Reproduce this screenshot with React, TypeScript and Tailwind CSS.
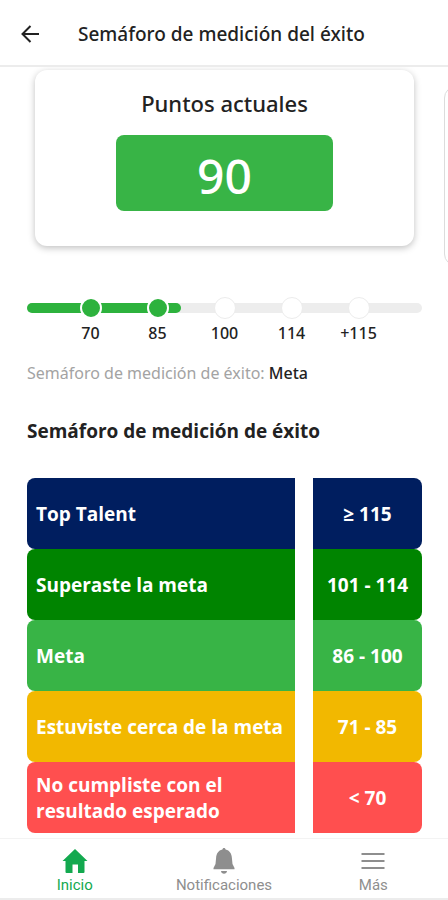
import React from "react";

type Step = {
  label: string;
  reached: boolean;
};

const steps: Step[] = [
  { label: "70", reached: true },
  { label: "85", reached: true },
  { label: "100", reached: false },
  { label: "114", reached: false },
  { label: "+115", reached: false },
];

const levels = [
  { name: "Top Talent", range: "≥ 115", color: "bg-[#001e5f]" },
  { name: "Superaste la meta", range: "101 - 114", color: "bg-[#008400]" },
  { name: "Meta", range: "86 - 100", color: "bg-[#38b446]" },
  { name: "Estuviste cerca de la meta", range: "71 - 85", color: "bg-[#f2b800]" },
  { name: "No cumpliste con el resultado esperado", range: "< 70", color: "bg-[#ff4f4f]" },
];

const Header = () => (
  <header className="flex h-[67px] items-center border-b-2 border-[#ececec] bg-white pt-0.5 pl-5">
    <button type="button" aria-label="Volver" className="mr-9">
      <svg width="22" height="22" viewBox="0 0 22 22" fill="none" stroke="#222" strokeWidth="2">
        <path d="M19 11H3M10.5 3L2.5 11L10.5 19" />
      </svg>
    </button>
    <h1 className="text-[19px] leading-7 font-medium text-[#222]">
      Semáforo de medición del éxito
    </h1>
  </header>
);

const ScoreCards = () => (
  <section className="flex gap-[30px] overflow-hidden pt-[3px] pb-[31px] pl-[35px]">
    <div className="h-[176px] w-[calc(100%-34px)] shrink-0 rounded-xl bg-white px-[81px] pt-[18px] text-center shadow-[0_2px_7px_rgba(0,0,0,0.25)]">
      <h2 className="text-[22px] leading-[30px] font-medium text-[#222]">Puntos actuales</h2>
      <p className="mt-[17px] rounded-lg bg-[#38b446] pt-1.5 text-5xl leading-[70px] font-medium text-white">
        90
      </p>
    </div>
    <div className="mt-4 h-[180px] w-full shrink-0 rounded-xl border border-[#dcdcdc] bg-white" />
  </section>
);

const Progress = ({ percent }: { percent: number }) => (
  <div className="grid items-start">
    <div className="col-start-1 row-start-1 mt-[6px] h-[10px] rounded-full bg-[#ededed]">
      <div className="h-full rounded-full bg-[#2db23d]" style={{ width: `${percent}%` }} />
    </div>
    <ol className="col-start-1 row-start-1 flex px-[30px]">
      {steps.map((step) => (
        <li key={step.label} className="flex flex-1 flex-col items-center">
          <span
            className={
              step.reached
                ? "size-[22px] rounded-full border-2 border-white bg-[#2db23d]"
                : "size-[22px] rounded-full border border-[#ececec] bg-white"
            }
          />
          <span className="mt-0.5 text-base leading-6 font-medium text-[#222]">{step.label}</span>
        </li>
      ))}
    </ol>
  </div>
);

const LevelsTable = () => (
  <table className="block w-full font-['Open_Sans',sans-serif] text-[19px] leading-[26px] font-bold text-white">
    <tbody className="block">
      {levels.map((level) => (
        <tr key={level.name} className="flex h-[71px] gap-[18px]">
          <th
            scope="row"
            className={`flex flex-1 items-center rounded-l-lg pr-2 pl-[9px] text-left ${level.color}`}
          >
            {level.name}
          </th>
          <td className={`flex w-[109px] items-center justify-center rounded-r-lg ${level.color}`}>
            {level.range}
          </td>
        </tr>
      ))}
    </tbody>
  </table>
);

const BottomNav = () => (
  <nav className="mt-[5px] grid h-[62px] grid-cols-3 border-t border-b-2 border-t-[#f3f3f3] border-b-[#ececec] bg-white font-[Roboto,sans-serif] text-[15px] leading-4 text-[#8e8e8e]">
    <a href="#inicio" className="flex flex-col items-center gap-0.5 pt-2 text-[#13a94f]">
      <svg width="28" height="28" viewBox="0 0 28 28" fill="currentColor">
        <path d="M14 2L26.5 14H23.5V25Q23.5 26 22.5 26H17V17.5H11.5V26H5.5Q4.5 26 4.5 25V14H1.5Z" />
      </svg>
      <span>Inicio</span>
    </a>
    <a href="#notificaciones" className="flex flex-col items-center gap-0.5 pt-2">
      <svg width="28" height="28" viewBox="0 0 28 28" fill="currentColor">
        <path d="M14 1C14.9 1 15.5 1.7 15.6 2.6C19.6 3.4 21.6 6.7 21.9 11L22.5 17L24.5 21V22.3H3.5V21L5.5 17L6.1 11C6.4 6.7 8.4 3.4 12.4 2.6C12.5 1.7 13.1 1 14 1Z" />
        <path d="M11 24H17C16.8 25.8 15.6 26.8 14 26.8S11.2 25.8 11 24Z" />
      </svg>
      <span>Notificaciones</span>
    </a>
    <a href="#mas" className="flex flex-col items-center gap-0.5 pt-2">
      <svg width="28" height="28" viewBox="0 0 28 28" stroke="currentColor" strokeWidth="2">
        <path d="M2.5 7H25.5M2.5 14H25.5M2.5 21H25.5" />
      </svg>
      <span>Más</span>
    </a>
  </nav>
);

const App = () => {
  return (
    <div className="min-h-screen bg-white font-['Noto_Sans',sans-serif]">
      <Header />
      <main>
        <ScoreCards />
        <div className="pr-[26px] pl-[27px]">
          <Progress percent={39} />
          <p className="mt-4 text-base leading-6 text-[#a3a3a3]">
            Semáforo de medición de éxito:{" "}
            <span className="font-medium text-[#222]">Meta</span>
          </p>
          <h2 className="mt-8 mb-[33px] font-['Open_Sans',sans-serif] text-[19px] leading-7 font-bold text-[#222]">
            Semáforo de medición de éxito
          </h2>
          <LevelsTable />
        </div>
      </main>
      <BottomNav />
    </div>
  );
};

export default App;
